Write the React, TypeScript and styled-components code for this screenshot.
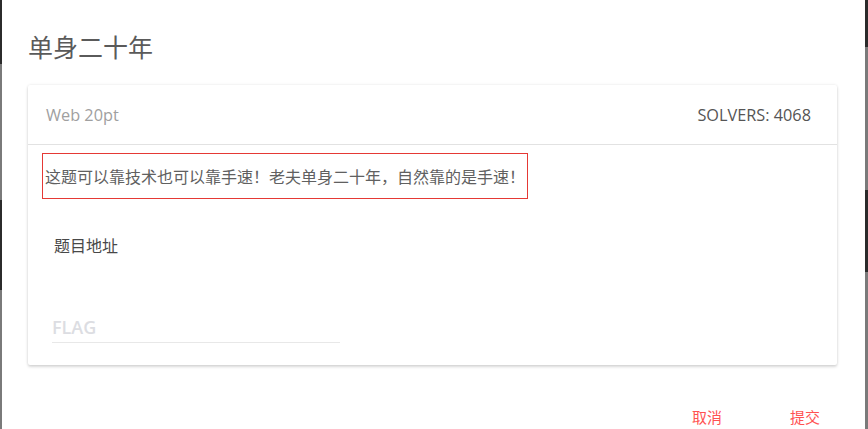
import React from "react";
import styled, { createGlobalStyle } from "styled-components";

const Global = createGlobalStyle`
  html, body { margin: 0; padding: 0; height: 100%; }
  body {
    overflow: hidden;
    font-family: "Open Sans", "Noto Sans CJK SC", sans-serif;
    background:
      linear-gradient(to bottom, #2b2b2b 0, #2b2b2b 64px, #7a7a7a 64px, #7a7a7a 200px, #2b2b2b 200px, #2b2b2b 290px, #7a7a7a 290px) left top / 2px 100% no-repeat,
      linear-gradient(to bottom, #2b2b2b 0, #2b2b2b 47px, #7a7a7a 47px, #7a7a7a 190px, #2b2b2b 190px, #2b2b2b 272px, #7a7a7a 272px) right top / 3px 100% no-repeat,
      #7a7a7a;
  }
`;

const Dialog = styled.div`
  margin: 0 3px 0 2px;
  height: 433px;
  background: #fff;
  display: flex;
  flex-direction: column;
  box-sizing: border-box;
`;

const Title = styled.h2`
  margin: 0;
  padding: 30px 26px 0;
  font-family: "Noto Sans CJK SC", sans-serif;
  font-size: 25px;
  line-height: 32px;
  font-weight: 400;
  color: #5a5a5a;
`;

const Card = styled.section`
  margin: 23px 28px 0 26px;
  height: 280px;
  background: #fff;
  border-radius: 2px;
  box-shadow: 0 2px 3px rgba(0, 0, 0, 0.14), 0 0 3px rgba(0, 0, 0, 0.1);
  display: flex;
  flex-direction: column;
`;

const CardHeader = styled.div`
  height: 59px;
  padding: 0 26px 0 18px;
  display: flex;
  align-items: center;
  justify-content: space-between;
  border-bottom: 1px solid #e2e2e2;
  font-size: 16.3px;
`;

const Category = styled.span`
  color: #a0a0a0;
`;

const Solvers = styled.span`
  color: #555;
`;

const CardBody = styled.div`
  display: flex;
  flex-direction: column;
  padding: 8px 14px 0;
`;

const Description = styled.div`
  width: 486px;
  height: 46px;
  box-sizing: border-box;
  border: 1px solid #e53935;
  padding: 0 2px;
  display: flex;
  align-items: center;
  font-family: "Noto Sans CJK SC", sans-serif;
  font-size: 16px;
  color: #606060;
  white-space: nowrap;
`;

const Link = styled.div`
  margin: 34px 0 0 12px;
  font-family: "Noto Sans CJK SC", sans-serif;
  font-size: 16px;
  line-height: 24px;
  color: #484848;
`;

const FlagInput = styled.input`
  margin: 55px 0 0 10px;
  width: 288px;
  height: 30px;
  padding: 0;
  border: none;
  border-bottom: 1px solid #e8e8e8;
  outline: none;
  background: transparent;
  font-family: "Open Sans", sans-serif;
  font-weight: 600;
  font-size: 18px;
  color: #333;
  &::placeholder {
    color: #dcdde2;
  }
`;

const Actions = styled.div`
  margin-top: auto;
  height: 32px;
  padding-right: 29px;
  display: flex;
  justify-content: flex-end;
  align-items: center;
  gap: 36px;
`;

const TextButton = styled.button`
  border: none;
  background: transparent;
  padding: 0 16px;
  font-family: "Noto Sans CJK SC", sans-serif;
  font-size: 15px;
  line-height: 32px;
  color: #ff5252;
  cursor: pointer;
`;

export default function App() {
  return (
    <>
      <Global />
      <Dialog>
        <Title>单身二十年</Title>
        <Card>
          <CardHeader>
            <Category>Web 20pt</Category>
            <Solvers>SOLVERS: 4068</Solvers>
          </CardHeader>
          <CardBody>
            <Description>这题可以靠技术也可以靠手速！老夫单身二十年，自然靠的是手速！</Description>
            <Link>题目地址</Link>
            <FlagInput placeholder="FLAG" />
          </CardBody>
        </Card>
        <Actions>
          <TextButton>取消</TextButton>
          <TextButton>提交</TextButton>
        </Actions>
      </Dialog>
    </>
  );
}
